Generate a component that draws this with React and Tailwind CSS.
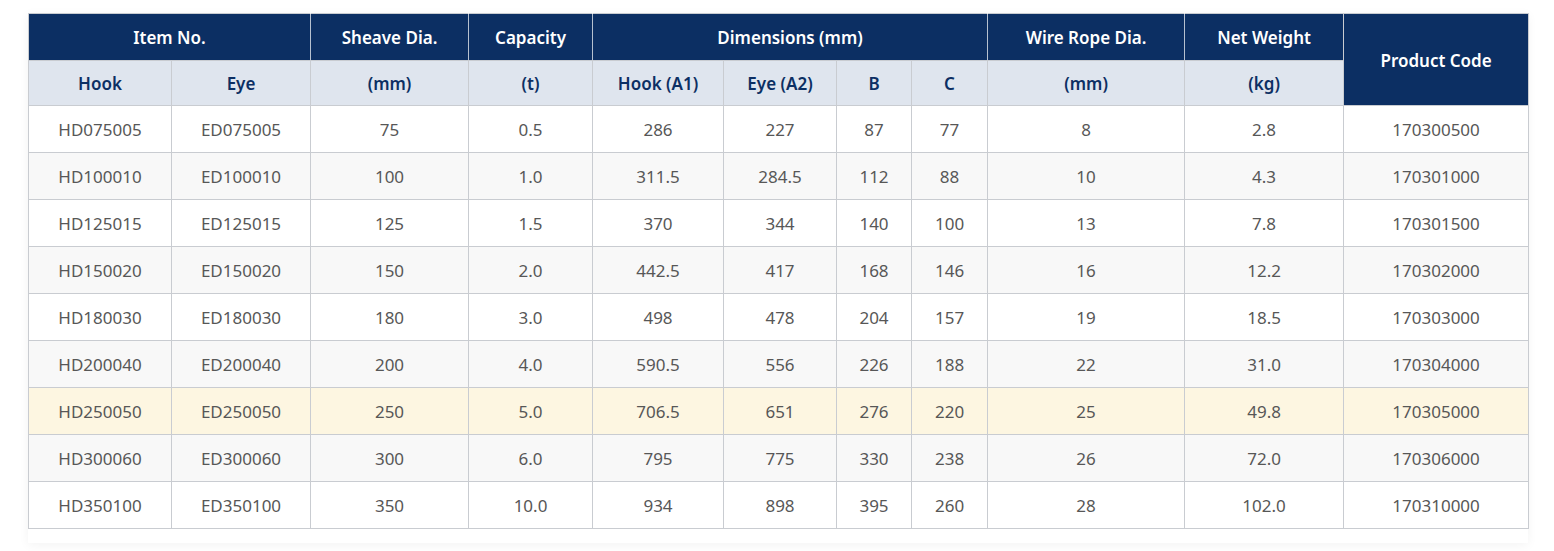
const rows = [
  ["HD075005", "ED075005", "75", "0.5", "286", "227", "87", "77", "8", "2.8", "170300500"],
  ["HD100010", "ED100010", "100", "1.0", "311.5", "284.5", "112", "88", "10", "4.3", "170301000"],
  ["HD125015", "ED125015", "125", "1.5", "370", "344", "140", "100", "13", "7.8", "170301500"],
  ["HD150020", "ED150020", "150", "2.0", "442.5", "417", "168", "146", "16", "12.2", "170302000"],
  ["HD180030", "ED180030", "180", "3.0", "498", "478", "204", "157", "19", "18.5", "170303000"],
  ["HD200040", "ED200040", "200", "4.0", "590.5", "556", "226", "188", "22", "31.0", "170304000"],
  ["HD250050", "ED250050", "250", "5.0", "706.5", "651", "276", "220", "25", "49.8", "170305000"],
  ["HD300060", "ED300060", "300", "6.0", "795", "775", "330", "238", "26", "72.0", "170306000"],
  ["HD350100", "ED350100", "350", "10.0", "934", "898", "395", "260", "28", "102.0", "170310000"],
]

const widths = [143, 139, 158, 124, 131, 113, 75, 76, 197, 159, 185]

export default function App() {
  return (
    <div className="bg-white min-h-[551px] pt-[13px] pl-[28px]" style={{ fontFamily: '"Noto Sans", "Open Sans", sans-serif' }}>
      <div className="w-[1500px] bg-white pb-[14px] shadow-[0_2px_10px_rgba(0,0,0,0.05)]">
        <table className="w-[1500px] table-fixed border-collapse text-[17px] text-center">
          <colgroup>
            {widths.map((w, i) => (
              <col key={i} style={{ width: w }} />
            ))}
          </colgroup>
          <thead>
            <tr className="bg-[#0c2f63] text-white h-[47px]">
              <th colSpan={2} className="border border-[#c9ccd1] border-r-white/70 font-semibold pt-[2px]">Item No.</th>
              <th className="border border-[#c9ccd1] border-r-white/70 font-semibold pt-[2px]">Sheave Dia.</th>
              <th className="border border-[#c9ccd1] border-r-white/70 font-semibold pt-[2px]">Capacity</th>
              <th colSpan={4} className="border border-[#c9ccd1] border-r-white/70 font-semibold pt-[2px]">Dimensions (mm)</th>
              <th className="border border-[#c9ccd1] border-r-white/70 font-semibold pt-[2px]">Wire Rope Dia.</th>
              <th className="border border-[#c9ccd1] font-semibold pt-[2px]">Net Weight</th>
              <th rowSpan={2} className="border border-[#c9ccd1] font-semibold pt-[2px]">Product Code</th>
            </tr>
            <tr className="bg-[#dfe5ee] text-[#0c2f63] h-[45px]">
              {["Hook", "Eye", "(mm)", "(t)", "Hook (A1)", "Eye (A2)", "B", "C", "(mm)", "(kg)"].map((t, i) => (
                <th key={i} className="border border-[#c9ccd1] font-semibold pt-[2px]">{t}</th>
              ))}
            </tr>
          </thead>
          <tbody className="text-[#575757]">
            {rows.map((r, i) => (
              <tr
                key={r[0]}
                className={`h-[47px] ${i === 6 ? "bg-[#fdf6e1]" : i % 2 === 1 ? "bg-[#f8f8f8]" : "bg-white"}`}
              >
                {r.map((c, j) => (
                  <td key={j} className="border border-[#c9ccd1] pt-[2px]">{c}</td>
                ))}
              </tr>
            ))}
          </tbody>
        </table>
      </div>
    </div>
  )
}
